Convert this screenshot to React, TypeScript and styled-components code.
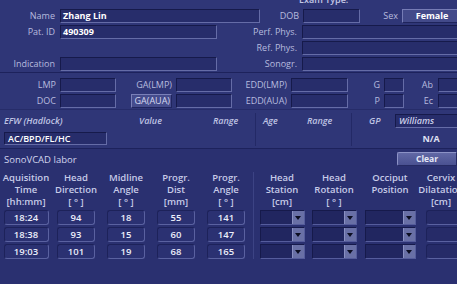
import React from "react";
import styled, { createGlobalStyle } from "styled-components";

const GlobalStyle = createGlobalStyle`
  html, body {
    margin: 0;
    padding: 0;
    background: #2b3172;
    overflow: hidden;
  }
  body {
    font-family: "Open Sans", "DejaVu Sans", sans-serif;
  }
`;

const Screen = styled.div`
  width: 457px;
  height: 284px;
  overflow: hidden;
  display: flex;
  flex-direction: column;
  background: #2f3677;
  color: #b7bbdf;
  font-size: 9px;
`;

/* ---------- top: patient ---------- */

const PatientSection = styled.section`
  display: flex;
  flex-direction: column;
  gap: 2px;
  height: 73px;
  box-sizing: border-box;
  border-bottom: 1px solid #1d225c;
`;

const ExamType = styled.div`
  height: 12px;
  margin-top: -5px;
  line-height: 10px;
  padding-left: 299px;
  font-weight: 600;
  color: #c4c8e6;
`;

const Row = styled.div`
  display: flex;
  align-items: center;
  height: 14px;
  flex: none;
`;

const Label = styled.div<{ $w: number; $pad?: number }>`
  width: ${(p) => p.$w}px;
  flex: none;
  box-sizing: border-box;
  padding-right: ${(p) => p.$pad ?? 5}px;
  display: flex;
  justify-content: flex-end;
  white-space: nowrap;
  line-height: 14px;
`;

const MarkedLabel = styled.span`
  box-sizing: border-box;
  height: 14px;
  line-height: 12px;
  padding: 0 1px 0 3px;
  background: #454c8c;
  border: 1px solid;
  border-color: #7a80b8 #20255e #20255e #7a80b8;
  color: #d6d9f0;
`;

const Field = styled.div<{ $w: number }>`
  width: ${(p) => p.$w}px;
  height: 14px;
  flex: none;
  box-sizing: border-box;
  background: #272d6b;
  border: 1px solid;
  border-color: #161a4b #656ca7 #656ca7 #161a4b;
  color: #ffffff;
  font-weight: 700;
  line-height: 12px;
  padding-left: 2px;
  white-space: nowrap;
  overflow: hidden;
`;

const Spacer = styled.div<{ $w: number }>`
  width: ${(p) => p.$w}px;
  flex: none;
`;

const ValueBox = styled.div<{ $w: number }>`
  width: ${(p) => p.$w}px;
  height: 14px;
  flex: none;
  box-sizing: border-box;
  background: #434a8a;
  border: 1px solid;
  border-color: #767cb5 #1f245c #1f245c #767cb5;
  color: #ffffff;
  font-weight: 700;
  line-height: 12px;
  text-align: center;
`;

/* ---------- middle: dates + EFW ---------- */

const DatesSection = styled.section`
  display: flex;
  flex-direction: column;
  border-bottom: 1px solid #1d225c;
`;

const DateRows = styled.div`
  display: flex;
  flex-direction: column;
  gap: 2px;
  padding-top: 5px;
`;

const HLine = styled.div`
  height: 1px;
  margin-top: 1px;
  background: #262c69;
`;

const EfwBlock = styled.div`
  display: grid;
  grid-template-columns: 255px 96px 1fr;
  padding: 3px 0 2px;
`;

const EfwGroup = styled.div<{ $cols: string; $left: number; $line?: boolean }>`
  display: grid;
  grid-template-columns: ${(p) => p.$cols};
  grid-template-rows: 15px 16px;
  row-gap: 2px;
  align-items: center;
  padding-left: ${(p) => p.$left}px;
  border-left: ${(p) => (p.$line ? "1px solid #232966" : "none")};
`;

const Caption = styled.div`
  font-style: italic;
  font-weight: 600;
  color: #bfc3e3;
  white-space: nowrap;
`;

const EfwField = styled.div<{ $w: number; $italic?: boolean }>`
  width: ${(p) => p.$w}px;
  height: ${(p) => (p.$italic ? 14 : 13)}px;
  box-sizing: border-box;
  background: #272d6b;
  border: 1px solid;
  border-color: #161a4b #656ca7 #656ca7 #161a4b;
  color: ${(p) => (p.$italic ? "#cdd0ea" : "#ffffff")};
  font-style: ${(p) => (p.$italic ? "italic" : "normal")};
  font-weight: 600;
  line-height: 11px;
  padding-left: 3px;
  white-space: nowrap;
  overflow: hidden;
`;

const NotAvail = styled.div`
  grid-column: 2;
  width: 72px;
  text-align: center;
  font-weight: 700;
  color: #dfe1f3;
`;

/* ---------- bottom: SonoVCAD labor ---------- */

const LaborSection = styled.section`
  flex: 1;
  display: flex;
  flex-direction: column;
  background: #2a3070;
`;

const LaborBar = styled.div`
  display: flex;
  align-items: center;
  justify-content: space-between;
  height: 14px;
  margin-top: 3px;
  padding-left: 4px;
  color: #d2d5ee;
  font-weight: 500;
  font-size: 9.5px;
`;

const ClearButton = styled.button`
  width: 60px;
  height: 14px;
  padding: 0;
  flex: none;
  box-sizing: border-box;
  font-family: inherit;
  font-size: 8.5px;
  font-weight: 700;
  color: #e6e8f7;
  background: linear-gradient(#6168a5, #4a5191);
  border: 1px solid;
  border-color: #8c92c6 #252a63 #252a63 #8c92c6;
  border-radius: 2px 0 0 2px;
  line-height: 12px;
`;

const LaborGrid = styled.div`
  display: grid;
  grid-template-columns: repeat(5, 50px) 4px 54px 50px 62px 40px;
  grid-template-rows: 36px 15px 15px 15px;
  row-gap: 2px;
  margin-top: 6px;
  padding-left: 1px;
  width: 461px;
`;

const ColDivider = styled.div`
  grid-column: 6;
  grid-row: 1 / 5;
  justify-self: center;
  width: 1px;
  background: #3c4384;
`;

const ColHead = styled.div<{ $col?: number }>`
  grid-column: ${(p) => p.$col ?? "auto"};
  display: flex;
  flex-direction: column;
  align-items: center;
  line-height: 12px;
  font-size: 9.5px;
  font-weight: 600;
  color: #c7cbe8;
  white-space: nowrap;
`;

const Cell = styled.div<{ $pad?: number; $col?: number }>`
  grid-column: ${(p) => p.$col ?? "auto"};
  display: flex;
  justify-content: ${(p) => (p.$pad === undefined ? "center" : "flex-start")};
  padding-left: ${(p) => p.$pad ?? 0}px;
`;

const DataBox = styled.div<{ $w: number }>`
  width: ${(p) => p.$w}px;
  height: 15px;
  box-sizing: border-box;
  border: 1px solid;
  border-color: #1d225a #5a61a0 #5a61a0 #1d225a;
  border-radius: 3px;
  background: #2b3172;
  color: #eceefa;
  font-size: 9.5px;
  font-weight: 600;
  line-height: 13px;
  text-align: center;
`;

const Dropdown = styled.div<{ $w: number }>`
  width: ${(p) => p.$w}px;
  height: 15px;
  display: flex;
  box-sizing: border-box;
  border: 1px solid;
  border-color: #161a4b #555c9c #555c9c #161a4b;
  background: #212660;
`;

const DropArrow = styled.div`
  margin-left: auto;
  width: 11px;
  display: flex;
  align-items: center;
  justify-content: center;
  background: #6970a6;
  border-left: 1px solid #8a90c2;

  &::after {
    content: "";
    border-left: 3px solid transparent;
    border-right: 3px solid transparent;
    border-top: 4px solid #0c0e22;
  }
`;

const EmptyBox = styled.div<{ $w: number }>`
  width: ${(p) => p.$w}px;
  height: 15px;
  box-sizing: border-box;
  border: 1px solid;
  border-color: #1d225a #5a61a0 #5a61a0 #1d225a;
  border-radius: 3px;
  background: #262b68;
`;

const heads: string[][] = [
  ["Aquisition", "Time", "[hh:mm]"],
  ["Head", "Direction", "[ ° ]"],
  ["Midline", "Angle", "[ ° ]"],
  ["Progr.", "Dist", "[mm]"],
  ["Progr.", "Angle", "[ ° ]"],
];

const rightHeads: string[][] = [
  ["Head", "Station", "[cm]"],
  ["Head", "Rotation", "[ ° ]"],
  ["Occiput", "Position"],
  ["Cervix", "Dilatation", "[cm]"],
];

const rows = [
  ["18:24", "94", "18", "55", "141"],
  ["18:38", "93", "15", "60", "147"],
  ["19:03", "101", "19", "68", "165"],
];

const App: React.FC = () => {
  return (
    <Screen>
      <GlobalStyle />
      <PatientSection>
        <ExamType>Exam Type:</ExamType>
        <Row>
          <Label $w={60}>Name</Label>
          <Field $w={200}>Zhang Lin</Field>
          <Label $w={43} $pad={4}>DOB</Label>
          <Field $w={57} />
          <Label $w={42} $pad={4}>Sex</Label>
          <ValueBox $w={60}>Female</ValueBox>
        </Row>
        <Row>
          <Label $w={60}>Pat. ID</Label>
          <Field $w={157}>490309</Field>
          <Label $w={85}>Perf. Phys.</Label>
          <Field $w={160} />
        </Row>
        <Row>
          <Label $w={60} />
          <Spacer $w={157} />
          <Label $w={85}>Ref. Phys.</Label>
          <Field $w={160} />
        </Row>
        <Row>
          <Label $w={60}>Indication</Label>
          <Field $w={157} />
          <Label $w={85}>Sonogr.</Label>
          <Field $w={160} />
        </Row>
      </PatientSection>

      <DatesSection>
        <DateRows>
          <Row>
            <Label $w={60} $pad={4}>LMP</Label>
            <Field $w={56} />
            <Label $w={60} $pad={4}>GA(LMP)</Label>
            <Field $w={56} />
            <Label $w={59} $pad={4}>EDD(LMP)</Label>
            <Field $w={57} />
            <Label $w={36} $pad={4}>G</Label>
            <Field $w={20} />
            <Label $w={34} $pad={5}>Ab</Label>
            <Field $w={30} />
          </Row>
          <Row>
            <Label $w={60} $pad={4}>DOC</Label>
            <Field $w={56} />
            <Label $w={60} $pad={4}>
              <MarkedLabel>GA(AUA)</MarkedLabel>
            </Label>
            <Field $w={56} />
            <Label $w={59} $pad={4}>EDD(AUA)</Label>
            <Field $w={57} />
            <Label $w={36} $pad={4}>P</Label>
            <Field $w={20} />
            <Label $w={34} $pad={5}>Ec</Label>
            <Field $w={30} />
          </Row>
        </DateRows>
        <HLine />
        <EfwBlock>
          <EfwGroup $cols="135px 74px 1fr" $left={4}>
            <Caption>EFW (Hadlock)</Caption>
            <Caption>Value</Caption>
            <Caption>Range</Caption>
            <EfwField $w={103}>AC/BPD/FL/HC</EfwField>
          </EfwGroup>
          <EfwGroup $cols="44px 1fr" $left={7} $line>
            <Caption>Age</Caption>
            <Caption>Range</Caption>
          </EfwGroup>
          <EfwGroup $cols="26px 1fr" $left={17} $line>
            <Caption>GP</Caption>
            <EfwField $w={72} $italic>
              Williams
            </EfwField>
            <NotAvail>N/A</NotAvail>
          </EfwGroup>
        </EfwBlock>
      </DatesSection>

      <LaborSection>
        <LaborBar>
          <span>SonoVCAD labor</span>
          <ClearButton>Clear</ClearButton>
        </LaborBar>
        <LaborGrid>
          <ColDivider />
          {heads.map((h, i) => (
            <ColHead key={"h" + i}>
              {h.map((t) => (
                <span key={t}>{t}</span>
              ))}
            </ColHead>
          ))}
          {rightHeads.map((h, i) => (
            <ColHead key={"r" + i} $col={7 + i}>
              {h.map((t) => (
                <span key={t}>{t}</span>
              ))}
            </ColHead>
          ))}
          {rows.map((r, ri) => (
            <React.Fragment key={ri}>
              {r.map((v, ci) => (
                <Cell key={ci}>
                  <DataBox $w={ci === 0 ? 45 : 38}>{v}</DataBox>
                </Cell>
              ))}
              <Cell $col={7}>
                <Dropdown $w={45}>
                  <DropArrow />
                </Dropdown>
              </Cell>
              <Cell>
                <Dropdown $w={45}>
                  <DropArrow />
                </Dropdown>
              </Cell>
              <Cell>
                <Dropdown $w={51}>
                  <DropArrow />
                </Dropdown>
              </Cell>
              <Cell $pad={5}>
                <EmptyBox $w={40} />
              </Cell>
            </React.Fragment>
          ))}
        </LaborGrid>
      </LaborSection>
    </Screen>
  );
};

export default App;
